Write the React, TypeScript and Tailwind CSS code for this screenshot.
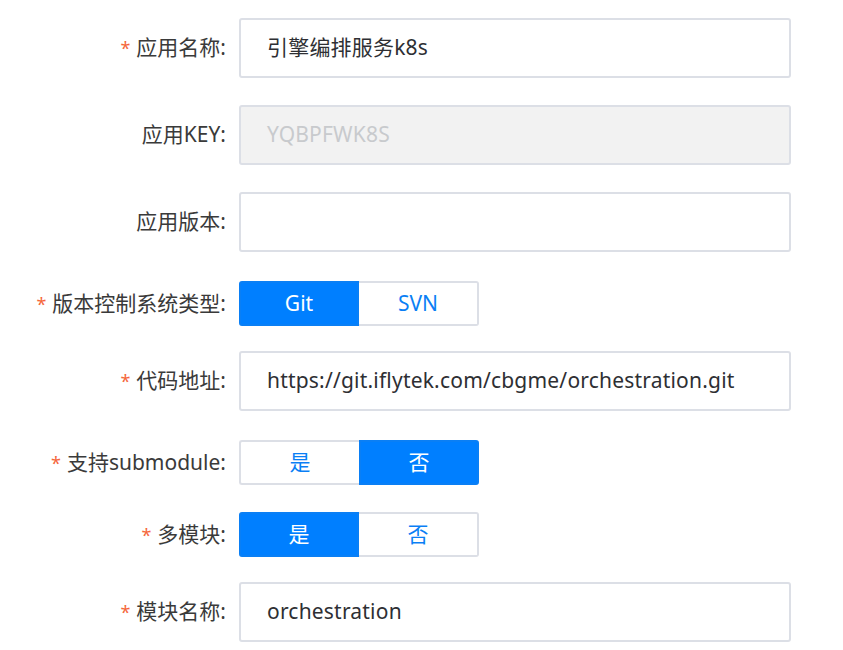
import { ReactNode } from 'react'

const font = { fontFamily: '"Noto Sans", "Noto Sans CJK SC", sans-serif' }

function Label({ text, required }: { text: string; required?: boolean }) {
  return (
    <div className="w-[239px] shrink-0 pr-[13px] text-right text-[21px] text-[#3a3a3a]">
      {required && <span className="mr-[6px] text-[18px] text-[#f5663c]">*</span>}
      {text}:
    </div>
  )
}

function TextInput({ value, disabled }: { value?: string; disabled?: boolean }) {
  return (
    <div
      className={
        disabled
          ? 'flex h-[60px] w-[552px] items-center rounded-[3px] border-2 border-[#dcdfe6] bg-[#f2f2f2] pl-[26px] text-[21px] tracking-[0.2px] text-[#c8cacd]'
          : 'flex h-[60px] w-[552px] items-center rounded-[3px] border-2 border-[#dcdfe6] bg-white pl-[26px] text-[21px] tracking-[0.2px] text-[#2e2f33]'
      }
    >
      {value}
    </div>
  )
}

function Segmented({ options, active }: { options: string[]; active: number }) {
  return (
    <div className="flex h-[45px]">
      {options.map((opt, i) => {
        const on = i === active
        return (
          <div
            key={opt}
            className={[
              'flex w-[120px] items-center justify-center text-[21px]',
              on ? 'border-2 border-[#0a7ff5] bg-[#007fff] text-white' : 'border-2 border-[#dcdfe6] bg-white text-[#0a7ff5]',
              i === 0 ? 'rounded-l-[3px]' : 'rounded-r-[3px]',
              i === 0 && !on ? 'border-r-0' : '',
              i === 1 && !on ? 'border-l-0' : '',
            ].join(' ')}
          >
            {opt}
          </div>
        )
      })}
    </div>
  )
}

function Row({ children, className }: { children: ReactNode; className: string }) {
  return <div className={'flex items-center ' + className}>{children}</div>
}

export default function App() {
  return (
    <div className="min-h-[650px] w-[843px] bg-white pt-[18px]" style={font}>
      <Row className="h-[60px]">
        <Label text="应用名称" required />
        <TextInput value="引擎编排服务k8s" />
      </Row>
      <Row className="mt-[27px] h-[60px]">
        <Label text="应用KEY" />
        <TextInput value="YQBPFWK8S" disabled />
      </Row>
      <Row className="mt-[27px] h-[60px]">
        <Label text="应用版本" />
        <TextInput />
      </Row>
      <Row className="mt-[29px] h-[45px]">
        <Label text="版本控制系统类型" required />
        <Segmented options={['Git', 'SVN']} active={0} />
      </Row>
      <Row className="mt-[25px] h-[60px]">
        <Label text="代码地址" required />
        <TextInput value="https://git.iflytek.com/cbgme/orchestration.git" />
      </Row>
      <Row className="mt-[29px] h-[45px]">
        <Label text="支持submodule" required />
        <Segmented options={['是', '否']} active={1} />
      </Row>
      <Row className="mt-[27px] h-[45px]">
        <Label text="多模块" required />
        <Segmented options={['是', '否']} active={0} />
      </Row>
      <Row className="mt-[25px] h-[60px]">
        <Label text="模块名称" required />
        <TextInput value="orchestration" />
      </Row>
    </div>
  )
}
